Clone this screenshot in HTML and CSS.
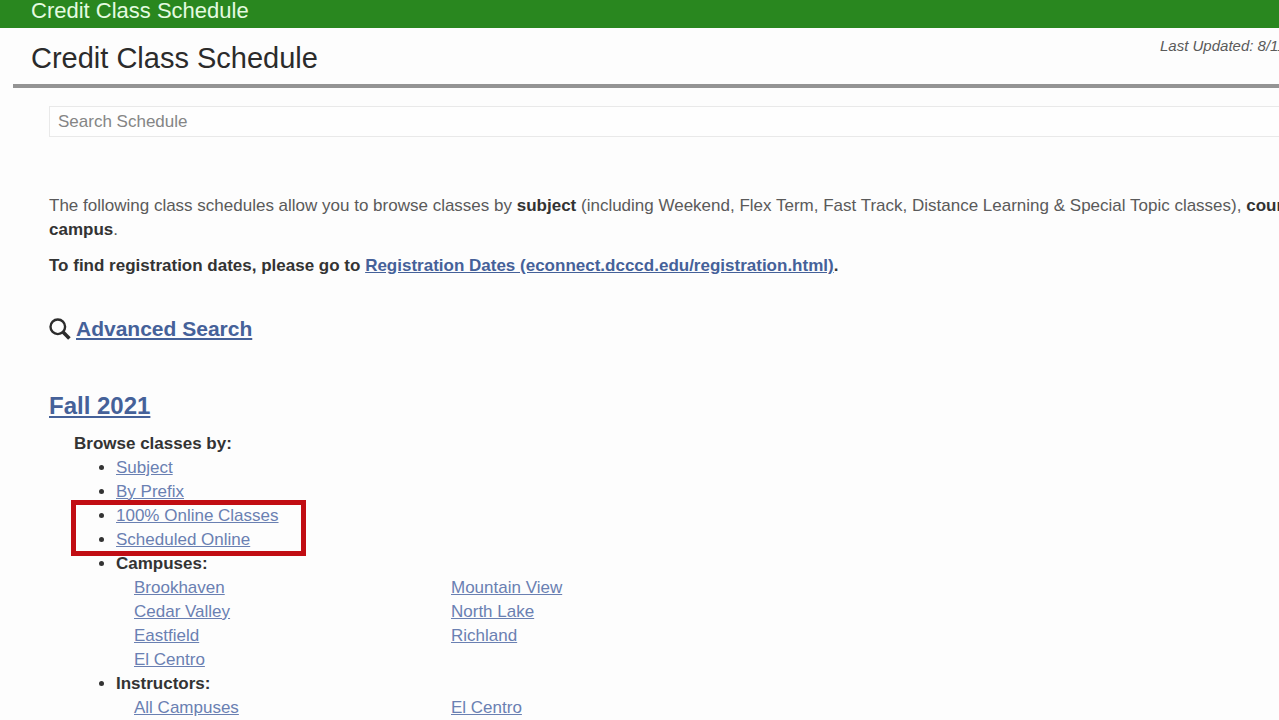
FILE: index.html
```html
<!DOCTYPE html>
<html lang="en">
<head>
<meta charset="utf-8">
<title>Credit Class Schedule</title>
<link rel="stylesheet" href="styles.css">
</head>
<body>
<div class="page">
  <header class="banner">Credit Class Schedule</header>
  <div class="title-row">
    <h1 class="title">Credit Class Schedule</h1>
    <p class="updated">Last Updated: 8/11/2021</p>
  </div>
  <main class="content">
    <form class="search">
      <input class="search-input" type="search" placeholder="Search Schedule" aria-label="Search Schedule">
    </form>
    <p class="intro">The following class schedules allow you to browse classes by <strong>subject</strong> (including Weekend, Flex Term, Fast Track, Distance Learning &amp; Special Topic classes), <strong>course</strong><br><strong>campus</strong>.</p>
    <p class="dates">To find registration dates, please go to <a href="#registration">Registration Dates (econnect.dcccd.edu/registration.html)</a>.</p>
    <div class="advanced">
      <svg class="advanced-icon" viewBox="0 0 22 22" aria-hidden="true">
        <circle cx="8.800" cy="8.800" r="7.300" fill="none" stroke="#2c2c2c" stroke-width="2.400"/>
        <path d="M14 14l6.400 6.400" stroke="#2c2c2c" stroke-width="3.600"/>
      </svg>
      <a href="#advanced">Advanced Search</a>
    </div>
    <h2 class="term"><a href="#fall">Fall 2021</a></h2>
    <section class="browse">
      <h3 class="browse-title">Browse classes by:</h3>
      <ul class="browse-list">
        <li><a href="#subject">Subject</a></li>
        <li><a href="#prefix">By Prefix</a></li>
        <li class="marked"><a href="#online">100% Online Classes</a></li>
        <li><a href="#scheduled">Scheduled Online</a></li>
        <li><strong>Campuses:</strong>
          <div class="columns">
            <div class="column"><a href="#bh">Brookhaven</a><a href="#cv">Cedar Valley</a><a href="#ef">Eastfield</a><a href="#ec">El Centro</a></div>
            <div class="column"><a href="#mv">Mountain View</a><a href="#nl">North Lake</a><a href="#rl">Richland</a></div>
          </div>
        </li>
        <li><strong>Instructors:</strong>
          <div class="columns">
            <div class="column"><a href="#all">All Campuses</a></div>
            <div class="column"><a href="#iec">El Centro</a></div>
          </div>
        </li>
      </ul>
    </section>
  </main>
</div>
</body>
</html>
```
FILE: styles.css
```css
*, *::before { box-sizing: border-box; }
html { overflow: hidden; }
body {
  margin: 0;
  background: #fdfdfd;
  color: #5a5a5a;
  font: 17px/24px "Liberation Sans", Arial, sans-serif;
}
h1, h2, h3, p, ul { margin: 0; padding: 0; }
a { color: #6a80b2; text-decoration: underline; }
strong { color: #333; }
.page { overflow: hidden; }
.banner {
  padding: 0 31px 6px;
  background: #29871f;
  color: #e4fbe0;
  font-size: 22px;
  line-height: 22px;
}
.title-row {
  display: flex;
  justify-content: space-between;
  align-items: flex-start;
  margin: 0 -80px 0 13px;
  padding: 6px 0 2px 18px;
  border-bottom: 4px solid #949494;
}
.title {
  color: #2b2b2b;
  font-size: 29px;
  font-weight: 400;
  line-height: 48px;
}
.updated {
  width: 199px;
  white-space: nowrap;
  font-size: 15px;
  font-style: italic;
}
.content { padding: 18px 0 0 49px; }
.search { margin-right: -40px; }
.search-input {
  display: block;
  width: 100%;
  height: 31px;
  padding: 0 8px;
  border: 1px solid #e9e9e9;
  background: #fefefe;
  font: inherit;
  outline: 0;
  appearance: none;
}
.search-input::placeholder { color: #858585; opacity: 1; }
.intro {
  margin-top: 57px;
  white-space: nowrap;
}
.dates {
  margin-top: 12px;
  color: #333;
  font-weight: 700;
}
.dates a, .advanced a, .term a { color: #456199; }
.advanced {
  display: flex;
  align-items: center;
  gap: 5px;
  margin-top: 36px;
  font-size: 21px;
  font-weight: 700;
  line-height: 30px;
}
.advanced-icon { width: 22px; height: 22px; }
.term {
  margin-top: 46px;
  font-size: 24px;
  line-height: 32px;
}
.browse { padding: 10px 0 0 25px; }
.browse-title {
  color: #333;
  font-size: 17px;
}
.browse-list { padding-left: 42px; }
.browse-list li::marker { color: #333; }
.marked { position: relative; }
.marked::before {
  content: "";
  position: absolute;
  top: -4px;
  left: -45px;
  width: 235px;
  height: 56px;
  border: 5px solid #c10d13;
  pointer-events: none;
}
.columns {
  display: grid;
  grid-template-columns: 317px 1fr;
  padding-left: 18px;
}
.column {
  display: flex;
  flex-direction: column;
  align-items: flex-start;
}
```
